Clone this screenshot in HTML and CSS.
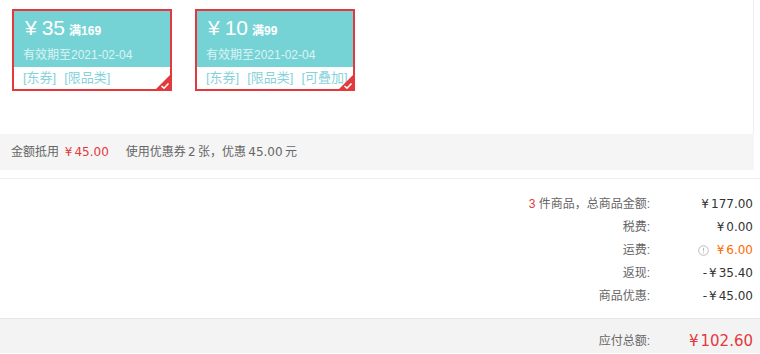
FILE: index.html
```html
<!DOCTYPE html>
<html lang="zh-CN">

<head>
    <meta charset="UTF-8">
    <meta name="viewport" content="width=device-width, initial-scale=1.0">
    <title>结算</title>
    <link rel="stylesheet" href="styles.css">
</head>

<body>

    <div class="coupon-box">
        <div class="coupon">
            <div class="coupon-top">
                <div class="coupon-price"><span class="yen">¥</span>35<span class="quota">满169</span></div>
                <div class="coupon-time">有效期至2021-02-04</div>
            </div>
            <div class="coupon-tags"><span>[东券]</span><span>[限品类]</span></div>
            <svg class="corner" width="18" height="18" viewBox="0 0 18 18">
                <polygon points="18,0 18,18 0,18" fill="#e4393c" />
                <path d="M7.5 13 L10 15.2 L14.5 10.5" stroke="#fff" stroke-width="1.6" fill="none" />
            </svg>
        </div>
        <div class="coupon">
            <div class="coupon-top">
                <div class="coupon-price"><span class="yen">¥</span>10<span class="quota">满99</span></div>
                <div class="coupon-time">有效期至2021-02-04</div>
            </div>
            <div class="coupon-tags"><span>[东券]</span><span>[限品类]</span><span>[可叠加]</span></div>
            <svg class="corner" width="18" height="18" viewBox="0 0 18 18">
                <polygon points="18,0 18,18 0,18" fill="#e4393c" />
                <path d="M7.5 13 L10 15.2 L14.5 10.5" stroke="#fff" stroke-width="1.6" fill="none" />
            </svg>
        </div>
    </div>

    <div class="used-bar">
        <span>金额抵用</span>
        <span class="red"><span class="yen">¥</span>45.00</span>
        <span class="used-info">使用优惠券 2 张，优惠 45.00 元</span>
    </div>

    <div class="summary">
        <div class="row">
            <div class="label"><span class="red">3</span> 件商品，总商品金额:</div>
            <div class="value"><span class="yen">¥</span>177.00</div>
        </div>
        <div class="row">
            <div class="label">税费:</div>
            <div class="value"><span class="yen">¥</span>0.00</div>
        </div>
        <div class="row">
            <div class="label">运费:</div>
            <div class="value">
                <svg class="info" width="11" height="11" viewBox="0 0 11 11">
                    <circle cx="5.5" cy="5.5" r="4.8" stroke="#bbb" stroke-width="1" fill="none" />
                    <path d="M5.5 2.8 V6.3 M5.5 7.3 V8.2" stroke="#bbb" stroke-width="1.1" />
                </svg>
                <span class="orange"><span class="yen">¥</span>6.00</span>
            </div>
        </div>
        <div class="row">
            <div class="label">返现:</div>
            <div class="value">-<span class="yen">¥</span>35.40</div>
        </div>
        <div class="row">
            <div class="label">商品优惠:</div>
            <div class="value">-<span class="yen">¥</span>45.00</div>
        </div>
    </div>

    <div class="total">
        <div class="label">应付总额:</div>
        <div class="value total-price"><span class="yen">¥</span>102.60</div>
    </div>

</body>

</html>
```

FILE: styles.css
```css
* {
    padding: 0;
    margin: 0;
    box-sizing: border-box;
}

body {
    width: 760px;
    font-family: "Liberation Sans", "Noto Sans CJK SC", sans-serif;
    font-size: 12px;
    color: #666;
    background: #fff;
}

.red {
    color: #e4393c;
}

.orange {
    color: #ff6a00;
}

.yen {
    margin: 0 2px;
}

.coupon-box {
    width: 754px;
    height: 134px;
    border-right: 1px solid #eee;
    padding: 9px 0 0 12px;
    display: flex;
    gap: 23px;
    align-items: flex-start;
}

.coupon {
    position: relative;
    width: 160px;
    height: 82px;
    border: 2px solid #e4393c;
    background: #fff;
}

.coupon-top {
    height: 56px;
    background: #75d3d5;
    color: #fff;
    padding: 5px 0 0 9px;
}

.coupon-price {
    font-size: 21px;
    line-height: 24px;
    padding-left: 2px;
}

.coupon-price .yen {
    margin: 0 5px 0 0;
}

.coupon-price .quota {
    font-size: 12px;
    font-weight: bold;
    margin-left: 4px;
}

.coupon-time {
    margin-top: 4px;
    font-size: 12px;
    line-height: 16px;
    color: rgba(255, 255, 255, 0.75);
}

.coupon-tags {
    height: 22px;
    line-height: 22px;
    padding-left: 9px;
    color: #86d2da;
    font-size: 13px;
    white-space: nowrap;
    overflow: hidden;
    display: flex;
    gap: 8px;
}

.corner {
    position: absolute;
    right: -2px;
    bottom: -2px;
    display: block;
}

.used-bar {
    width: 754px;
    height: 36px;
    line-height: 36px;
    background: #f5f5f5;
    padding-left: 11px;
    color: #666;
    font-family: "DejaVu Sans", "Noto Sans CJK SC", sans-serif;
}

.used-bar .red {
    margin-left: 2px;
}

.used-bar .yen {
    margin: 0 2px 0 0;
}

.used-info {
    margin-left: 13px;
    word-spacing: -1.5px;
}

.summary {
    margin-top: 8px;
    border-top: 1px solid #eee;
    padding: 14px 0 10px;
}

.row,
.total {
    display: flex;
    height: 23px;
    line-height: 23px;
    padding-right: 7px;
}

.label {
    flex: 1;
    text-align: right;
    color: #666;
}

.value {
    width: 103px;
    text-align: right;
    color: #333;
    font-family: "DejaVu Sans", "Noto Sans CJK SC", sans-serif;
    font-size: 12px;
    display: flex;
    justify-content: flex-end;
    align-items: center;
}

.info {
    margin-right: 6px;
}

.total {
    height: 35px;
    line-height: 35px;
    padding-top: 9px;
    border-top: 1px solid #e6e6e6;
    background: #f3f3f3;
}

.total .label {
    line-height: 26px;
}

.total-price {
    color: #e4393c;
    font-size: 15px;
    line-height: 26px;
}
```
